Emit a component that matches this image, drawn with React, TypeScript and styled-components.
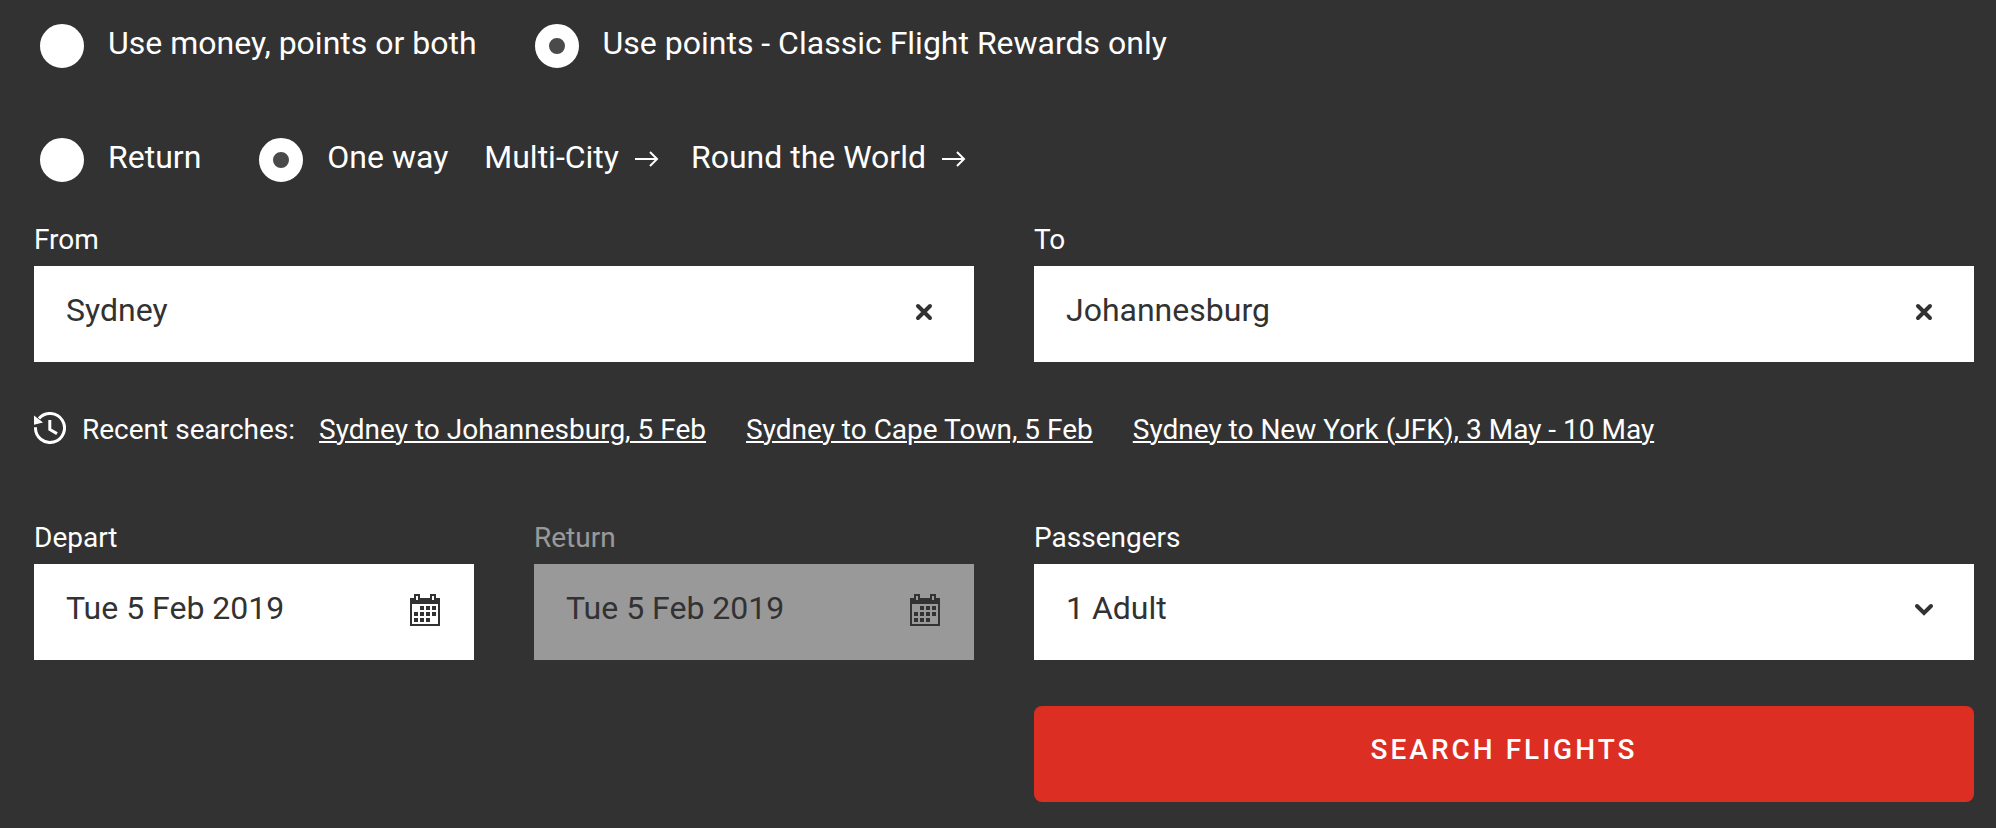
import { useId, useState } from "react";
import styled, { createGlobalStyle } from "styled-components";

const INK = "#323232";

const GlobalStyle = createGlobalStyle`
  *, *::before, *::after { box-sizing: border-box; }
  body {
    margin: 0;
    background: ${INK};
    color: #fff;
    font-family: Roboto, "Liberation Sans", sans-serif;
    font-size: 28px;
    line-height: 36px;
  }
  button, input, select { font: inherit; color: inherit; }
`;

const SearchForm = styled.form`
  padding: 24px 22px 26px 34px;
`;

const OptionRow = styled.div`
  display: flex;
  flex-wrap: wrap;
  align-items: flex-start;
  padding-left: 6px;
  font-size: 32px;
  line-height: 38px;

  & + & {
    margin-top: 70px;
  }
`;

const RadioGroup = styled.div`
  display: flex;
  flex-wrap: wrap;
  gap: 58px;
`;

const RadioLabel = styled.label`
  display: flex;
  align-items: flex-start;
  gap: 24px;
  cursor: pointer;
`;

const Radio = styled.input`
  appearance: none;
  flex: none;
  width: 44px;
  height: 44px;
  margin: 0;
  border: 14px solid #fff;
  border-radius: 50%;
  background: #fff;

  &:checked {
    background: #4a4a4a;
  }
`;

const TripLinks = styled.nav`
  display: flex;
  flex-wrap: wrap;
  gap: 32px;
  margin-left: 36px;
`;

const TripLink = styled.a`
  display: flex;
  align-items: center;
  gap: 16px;
  color: inherit;
  text-decoration: none;
`;

const Columns = styled.div<{ $top?: number }>`
  display: grid;
  grid-template-columns: repeat(2, minmax(0, 1fr));
  align-items: start;
  column-gap: 60px;
  margin-top: ${({ $top = 0 }) => $top}px;
`;

const FieldGroup = styled.div<{ $disabled?: boolean }>`
  display: flex;
  flex-direction: column;
  gap: 8px;
  opacity: ${({ $disabled }) => ($disabled ? 0.5 : 1)};
`;

const FieldBox = styled.div`
  display: flex;
  align-items: center;
  height: 96px;
  padding: 0 34px 4px 32px;
  background: #fff;
  color: ${INK};
  font-size: 32px;
`;

const TextInput = styled.input`
  flex: 1;
  min-width: 0;
  height: 100%;
  padding: 0 0 4px;
  border: 0;
  outline: 0;
  background: transparent;
`;

const Select = styled.select`
  appearance: none;
  flex: 1;
  min-width: 0;
  height: 100%;
  margin-right: -32px;
  padding: 0 32px 4px 0;
  border: 0;
  outline: 0;
  background: transparent;
`;

const IconButton = styled.button`
  flex: none;
  display: flex;
  padding: 0;
  border: 0;
  background: transparent;
  cursor: pointer;
`;

const FieldIcon = styled.svg`
  flex: none;
  pointer-events: none;
`;

const RecentSearches = styled.div`
  display: flex;
  flex-wrap: wrap;
  align-items: flex-start;
  gap: 16px;
  margin-top: 50px;
`;

const RecentLinks = styled.nav`
  display: flex;
  flex-wrap: wrap;
  gap: 40px;
  padding-left: 8px;
`;

const RecentLink = styled.a`
  color: inherit;
  text-decoration: underline;
  text-decoration-thickness: 2px;
  text-underline-offset: 2px;
`;

const SubmitButton = styled.button`
  grid-column: 2;
  height: 96px;
  margin-top: 46px;
  padding: 0 0 8px;
  border: 0;
  border-radius: 8px;
  background: #dc2e22;
  color: #fff;
  font-weight: 500;
  letter-spacing: 3px;
  text-transform: uppercase;
  cursor: pointer;
`;

const ArrowIcon = () => (
  <svg width="24" height="20" viewBox="0 0 24 20" fill="none" stroke="currentColor" strokeWidth="2" aria-hidden="true">
    <path d="M0 12H22M15 5L22 12L15 19" />
  </svg>
);

const CrossIcon = () => (
  <svg width="32" height="32" viewBox="0 0 32 32" stroke="currentColor" strokeWidth="4" strokeLinecap="round" aria-hidden="true">
    <path d="M10 10L22 22M22 10L10 22" />
  </svg>
);

const ChevronIcon = () => (
  <FieldIcon width="32" height="32" viewBox="0 0 32 32" fill="none" stroke="currentColor" strokeWidth="4" strokeLinecap="round" aria-hidden="true">
    <path d="M9 12L16 19L23 12" />
  </FieldIcon>
);

const CalendarIcon = () => (
  <svg width="32" height="32" viewBox="0 0 32 32" fill="currentColor" fillRule="evenodd" aria-hidden="true">
    <path d="M6 0H12V4H22V0H28V4H32V32H2V4H6ZM8 2V6H10V2ZM24 2V6H26V2ZM4 10V30H30V10Z" />
    <path d="M12 12h4v4h-4zM18 12h4v4h-4zM24 12h4v4h-4zM6 18h4v4h-4zM12 18h4v4h-4zM18 18h4v4h-4zM24 18h4v4h-4zM6 24h4v4h-4zM12 24h4v4h-4zM18 24h4v4h-4z" />
  </svg>
);

const HistoryIcon = () => (
  <svg width="32" height="32" viewBox="0 0 32 32" fill="none" stroke="currentColor" strokeWidth="3" aria-hidden="true">
    <path d="M1.5 15.3A14.5 14.5 0 1 0 5 6.5" />
    <path d="M15.8 8V17.5L23 21.6" />
    <path d="M0 3.5L9 10.5L0 12.8Z" fill="currentColor" stroke="none" />
  </svg>
);

type RadioOptionsProps = {
  name: string;
  label: string;
  options: string[];
  initial: string;
};

function RadioOptions({ name, label, options, initial }: RadioOptionsProps) {
  const [selected, setSelected] = useState(initial);
  return (
    <RadioGroup role="radiogroup" aria-label={label}>
      {options.map((option) => (
        <RadioLabel key={option}>
          <Radio
            type="radio"
            name={name}
            value={option}
            checked={selected === option}
            onChange={() => setSelected(option)}
          />
          {option}
        </RadioLabel>
      ))}
    </RadioGroup>
  );
}

function PlaceField({ label, initial }: { label: string; initial: string }) {
  const id = useId();
  const [place, setPlace] = useState(initial);
  return (
    <FieldGroup>
      <label htmlFor={id}>{label}</label>
      <FieldBox>
        <TextInput id={id} type="text" value={place} onChange={(e) => setPlace(e.target.value)} />
        <IconButton type="button" aria-label={`Clear ${label}`} onClick={() => setPlace("")}>
          <CrossIcon />
        </IconButton>
      </FieldBox>
    </FieldGroup>
  );
}

function DateField({ label, value, disabled }: { label: string; value: string; disabled?: boolean }) {
  const id = useId();
  return (
    <FieldGroup $disabled={disabled}>
      <label htmlFor={id}>{label}</label>
      <FieldBox>
        <TextInput id={id} type="text" defaultValue={value} disabled={disabled} />
        <IconButton type="button" aria-label={`Choose ${label} date`} disabled={disabled}>
          <CalendarIcon />
        </IconButton>
      </FieldBox>
    </FieldGroup>
  );
}

const recent = [
  "Sydney to Johannesburg, 5 Feb",
  "Sydney to Cape Town, 5 Feb",
  "Sydney to New York (JFK), 3 May - 10 May",
];

export default function App() {
  const passengersId = useId();
  return (
    <>
      <GlobalStyle />
      <SearchForm onSubmit={(e) => e.preventDefault()}>
        <OptionRow>
          <RadioOptions
            name="payment"
            label="Payment type"
            options={["Use money, points or both", "Use points - Classic Flight Rewards only"]}
            initial="Use points - Classic Flight Rewards only"
          />
        </OptionRow>
        <OptionRow>
          <RadioOptions name="trip" label="Trip type" options={["Return", "One way"]} initial="One way" />
          <TripLinks aria-label="Other trips">
            <TripLink href="#multi-city">
              Multi-City <ArrowIcon />
            </TripLink>
            <TripLink href="#round-the-world">
              Round the World <ArrowIcon />
            </TripLink>
          </TripLinks>
        </OptionRow>

        <Columns $top={40}>
          <PlaceField label="From" initial="Sydney" />
          <PlaceField label="To" initial="Johannesburg" />
        </Columns>

        <RecentSearches>
          <HistoryIcon />
          <span>Recent searches:</span>
          <RecentLinks aria-label="Recent searches">
            {recent.map((search) => (
              <RecentLink key={search} href="#recent">
                {search}
              </RecentLink>
            ))}
          </RecentLinks>
        </RecentSearches>

        <Columns $top={72}>
          <Columns>
            <DateField label="Depart" value="Tue 5 Feb 2019" />
            <DateField label="Return" value="Tue 5 Feb 2019" disabled />
          </Columns>
          <FieldGroup>
            <label htmlFor={passengersId}>Passengers</label>
            <FieldBox>
              <Select id={passengersId} defaultValue="1">
                <option value="1">1 Adult</option>
                <option value="2">2 Adults</option>
              </Select>
              <ChevronIcon />
            </FieldBox>
          </FieldGroup>
          <SubmitButton type="submit">Search flights</SubmitButton>
        </Columns>
      </SearchForm>
    </>
  );
}
